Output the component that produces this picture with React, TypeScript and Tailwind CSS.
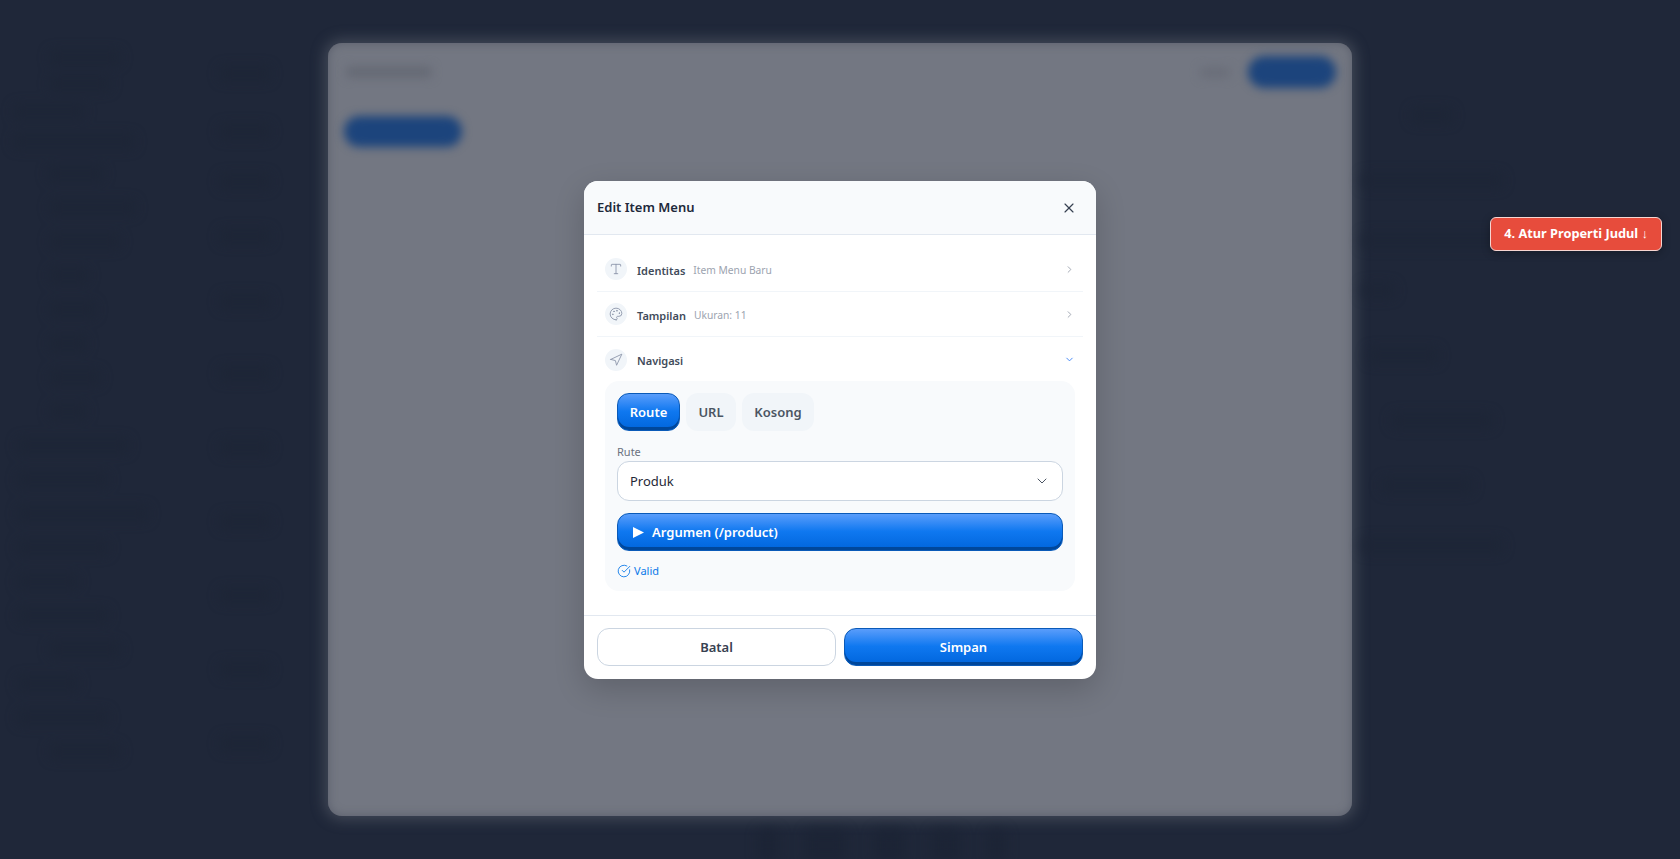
import { ChevronDown, ChevronRight, CircleCheckBig, Navigation, Palette, Type, X } from "lucide-react";
import type { ReactNode } from "react";

const sans = { fontFamily: '"Noto Sans", sans-serif' };

// Blobs of the dimmed page behind the dialog: [width, left indent, row height]
const leftNav = [
  [70, 50, 26], [60, 50, 26], [70, 14, 30], [120, 14, 30], [55, 48, 34], [85, 50, 34], [70, 50, 34],
  [38, 50, 34], [45, 50, 34], [36, 50, 34], [50, 50, 34], [36, 50, 34], [110, 18, 34], [90, 18, 34],
  [130, 18, 34], [90, 18, 34], [60, 18, 34], [90, 18, 34], [70, 50, 34], [60, 18, 34], [90, 18, 34], [70, 50, 34],
];
const midNav = [
  [50, 8, 66], [50, 8, 50], [50, 8, 50], [50, 8, 60], [50, 8, 70], [50, 8, 74], [50, 8, 74], [50, 8, 74], [50, 8, 74], [50, 8, 74], [50, 8, 74],
];
const rightNav = [
  [40, 60, 50], [140, 10, 80], [140, 10, 40], [32, 10, 60], [70, 16, 70], [100, 40, 60], [90, 30, 70], [140, 10, 50],
];
const dockBlobs = [20, 40, 30, 28, 18];

function Blobs({ rows, className }: { rows: number[][]; className: string }) {
  return (
    <div className={className}>
      {rows.map(([w, ml, h], i) => (
        <div key={i} className="flex items-center" style={{ height: h, marginLeft: ml }}>
          <div className="h-[13px] rounded bg-[#1d2536]" style={{ width: w }} />
        </div>
      ))}
    </div>
  );
}

function Section({
  icon,
  title,
  hint,
  open,
  divider,
}: {
  icon: ReactNode;
  title: string;
  hint?: string;
  open?: boolean;
  divider?: boolean;
}) {
  return (
    <div className={`flex h-[45px] items-center pl-2 pr-[8px] ${divider ? "border-b border-[#f1f5f9]" : ""}`}>
      <div className="flex h-[22px] w-[22px] shrink-0 items-center justify-center rounded-full bg-[#f1f5f9] text-[#8a94a8]">
        {icon}
      </div>
      <span className="ml-[10px] translate-y-[2px] text-[11px] font-semibold text-[#414b5a]">{title}</span>
      {hint && <span className="ml-2 translate-y-[2px] text-[10.25px] text-[#9ca3af]">{hint}</span>}
      <span className="ml-auto">
        {open ? (
          <ChevronDown size={11} strokeWidth={2} className="text-[#3b82f6]" />
        ) : (
          <ChevronRight size={11} strokeWidth={2} className="text-[#9ca3af]" />
        )}
      </span>
    </div>
  );
}

const glossy =
  "bg-[linear-gradient(180deg,#5a9dfb_0%,#0f78f0_48%,#0065dc_100%)] border border-[#0a5ab8] shadow-[inset_0_-3px_0_#00479b] text-white";

export default function App() {
  return (
    <div className="relative h-[859px] w-[1680px] overflow-hidden bg-[#1f2739]" style={sans}>
      {/* dimmed page */}
      <div className="flex h-full">
        <div className="w-[328px] shrink-0 blur-[6px]">
          <div className="flex">
            <Blobs rows={leftNav} className="w-[212px] pt-[44px]" />
            <Blobs rows={midNav} className="w-[116px] pt-[40px]" />
          </div>
        </div>

        <div className="flex w-[1024px] shrink-0 flex-col pt-[43px]">
          <div className="flex h-[773px] shrink-0 flex-col rounded-[14px] bg-[#737782] px-[16px] pt-[13px] shadow-[0_0_14px_4px_rgba(115,119,130,0.4),inset_0_0_10px_rgba(70,74,90,0.55)]">
            <div className="flex items-center justify-between blur-[5px]">
              <div className="ml-[2px] h-[12px] w-[86px] rounded bg-[#666a75]" />
              <div className="flex items-center gap-[18px]">
                <div className="h-[11px] w-[30px] rounded bg-[#6a6e79]" />
                <div className="h-[32px] w-[88px] rounded-full bg-[#1c447c]" />
              </div>
            </div>
            <div className="mt-[28px] h-[31px] w-[118px] rounded-full bg-[#1c447c] blur-[5px]" />
          </div>
          <div className="ml-[430px] mt-[14px] flex gap-[28px] blur-[6px]">
            {dockBlobs.map((w, i) => (
              <div key={i} className="h-[30px] rounded bg-[#1c2435]" style={{ width: w }} />
            ))}
          </div>
        </div>

        <div className="flex-1 blur-[6px]">
          <Blobs rows={rightNav} className="pt-[90px]" />
        </div>
      </div>

      {/* step hint */}
      <div className="absolute left-[1490px] top-[217px] flex h-[34px] w-[172px] items-center justify-center rounded-[6px] border border-[#f6d5d1] bg-[#e74c3c] text-[12.75px] font-bold text-white shadow-[0_2px_8px_rgba(0,0,0,0.3)]">
        4. Atur Properti Judul ↓
      </div>

      {/* dialog */}
      <div className="absolute left-[584px] top-[181px] flex h-[498px] w-[512px] flex-col overflow-hidden rounded-[14px] bg-white shadow-[0_10px_30px_rgba(0,0,0,0.18)]">
        <div className="flex h-[54px] shrink-0 items-center justify-between border-b border-[#e2e8f0] bg-[#f8fafc] pl-[13px] pr-[19px]">
          <h2 className="pt-px text-[13px] font-semibold text-[#1e293b]">Edit Item Menu</h2>
          <X size={16} strokeWidth={1.75} className="text-[#374151]" />
        </div>

        <div className="flex-1 px-[13px] pt-[12px]">
          <Section icon={<Type size={14} strokeWidth={1.5} />} title="Identitas" hint="Item Menu Baru" divider />
          <Section icon={<Palette size={14} strokeWidth={1.5} />} title="Tampilan" hint="Ukuran: 11" divider />
          <Section icon={<Navigation size={14} strokeWidth={1.5} />} title="Navigasi" open />

          <div className="mx-2 -mt-px h-[210px] rounded-[14px] bg-[#f8fafc] px-3 pt-3">
            <div className="flex gap-[6px] text-[13px] font-semibold">
              <button className={`h-[38px] w-[63px] rounded-[12px] pt-px ${glossy}`}>Route</button>
              <button className="h-[38px] w-[50px] rounded-[12px] bg-[#f1f5f9] pt-px text-[#4b5563]">URL</button>
              <button className="h-[38px] w-[72px] rounded-[12px] bg-[#f1f5f9] pt-px text-[#4b5563]">Kosong</button>
            </div>

            <div className="mt-[12px] text-[11px] leading-[18px] text-[#6b7280]">Rute</div>
            <div className="flex h-[40px] items-center justify-between rounded-[12px] border border-[#cbd5e1] bg-white pl-3 pr-[12px] text-[13px] text-[#1f2937]">
              <span className="pt-[2px]">Produk</span>
              <ChevronDown size={16} strokeWidth={1.5} className="text-[#4b5563]" />
            </div>

            <button className={`mt-[12px] flex h-[38px] w-full items-center rounded-[12px] pl-[15px] text-[13px] font-semibold ${glossy}`}>
              <svg width="11" height="11" viewBox="0 0 11 11" className="mr-[8px]" fill="currentColor">
                <polygon points="0,0 11,5.5 0,11" />
              </svg>
              <span className="pt-[2px]">Argumen (/product)</span>
            </button>

            <div className="mt-[12px] flex items-center gap-[3px] text-[11px] text-[#0a78e8]">
              <CircleCheckBig size={14} strokeWidth={1.5} />
              Valid
            </div>
          </div>
        </div>

        <div className="flex h-[64px] shrink-0 gap-[8px] border-t border-[#e2e8f0] px-[13px] pt-[12px] text-[13px] font-semibold">
          <button className="h-[38px] flex-1 rounded-[12px] border border-[#cbd5e1] bg-white pt-px text-[#374151]">Batal</button>
          <button className={`h-[38px] flex-1 rounded-[12px] pt-px ${glossy}`}>Simpan</button>
        </div>
      </div>
    </div>
  );
}
